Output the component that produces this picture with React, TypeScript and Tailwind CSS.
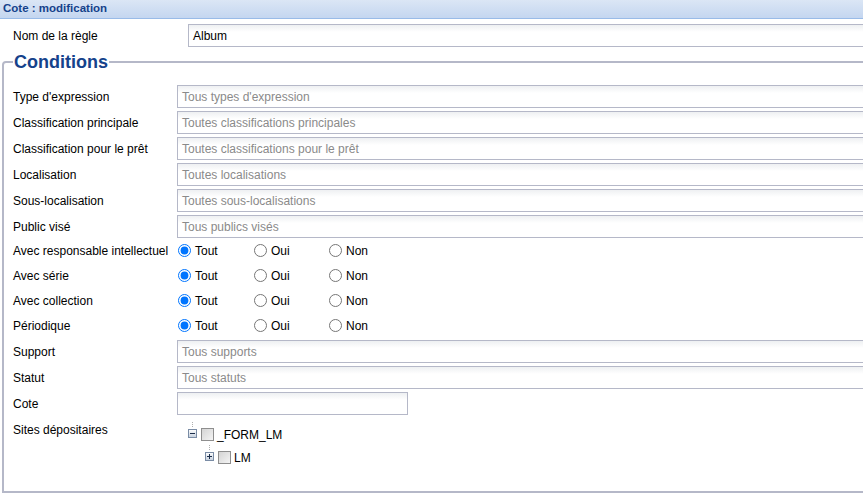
import React from 'react';

const FONT = "font-['Liberation_Sans',Arial,sans-serif]";

type FieldProps = { value?: string; placeholder?: string; className?: string };

// ExtJS-like text field: thin grey border, faint top shading
const TextField: React.FC<FieldProps> = ({ value, placeholder, className }) => (
  <div
    className={`h-[23px] border border-[#b5b8c8] bg-[linear-gradient(to_bottom,#eef0f2,#ffffff_7px)] flex items-center px-[4px] text-[12px] whitespace-nowrap overflow-hidden ${className ?? ''}`}
  >
    {value ? <span className="text-black">{value}</span> : <span className="text-[#8a8a8a]">{placeholder}</span>}
  </div>
);

const Label: React.FC<{ children: React.ReactNode }> = ({ children }) => (
  <div className="text-[12px] text-black whitespace-nowrap leading-none">{children}</div>
);

const selects: [string, string][] = [
  ["Type d'expression", "Tous types d'expression"],
  ['Classification principale', 'Toutes classifications principales'],
  ['Classification pour le prêt', 'Toutes classifications pour le prêt'],
  ['Localisation', 'Toutes localisations'],
  ['Sous-localisation', 'Toutes sous-localisations'],
  ['Public visé', 'Tous publics visés'],
];

const triState = ['Avec responsable intellectuel', 'Avec série', 'Avec collection', 'Périodique'];

const RadioRow: React.FC<{ name: string; label: string }> = ({ name, label }) => (
  <div className="flex items-center h-[25px]">
    <div className="w-[164px] shrink-0">
      <Label>{label}</Label>
    </div>
    <div className="flex items-center text-[12px] text-black pl-[1px]">
      <label className="flex items-center w-[76px] gap-[4px]">
        <input type="radio" name={name} defaultChecked className="w-[13px] h-[13px] m-0" />
        <span>Tout</span>
      </label>
      <label className="flex items-center w-[75px] gap-[4px]">
        <input type="radio" name={name} className="w-[13px] h-[13px] m-0" />
        <span>Oui</span>
      </label>
      <label className="flex items-center gap-[4px]">
        <input type="radio" name={name} className="w-[13px] h-[13px] m-0" />
        <span>Non</span>
      </label>
    </div>
  </div>
);

// small expand/collapse toggle used in the tree
const TreeToggle: React.FC<{ open: boolean }> = ({ open }) => (
  <svg width="9" height="9" viewBox="0 0 9 9" className="shrink-0">
    <defs>
      <linearGradient id={open ? 'tg-o' : 'tg-c'} x1="0" y1="0" x2="0" y2="1">
        <stop offset="0" stopColor="#ffffff" />
        <stop offset="1" stopColor="#c3cedc" />
      </linearGradient>
    </defs>
    <rect x="0.5" y="0.5" width="8" height="8" fill={`url(#${open ? 'tg-o' : 'tg-c'})`} stroke="#7a8ca5" />
    <path d="M2 4.5h5" stroke="#1b2d4a" strokeWidth="1" />
    {!open && <path d="M4.5 2v5" stroke="#1b2d4a" strokeWidth="1" />}
  </svg>
);

const TreeCheck: React.FC = () => (
  <div className="w-[13px] h-[13px] border border-[#8e8e8e] bg-[linear-gradient(135deg,#d4d4d4,#f4f4f4)] shrink-0" />
);

const App: React.FC = () => {
  return (
    <div className={`w-[863px] h-[498px] bg-white overflow-hidden ${FONT}`}>
      {/* window title */}
      <div className="h-[19px] border-b border-[#99bbe8] bg-[linear-gradient(to_bottom,#dbe6f5,#c4d6f0)] flex items-center px-[3px]">
        <span className="text-[11.5px] font-bold text-[#15428b] leading-none">Cote : modification</span>
      </div>

      <div className="flex items-center mt-[5px] h-[23px] pl-[13px] w-[1100px]">
        <div className="w-[175px] shrink-0">
          <Label>Nom de la règle</Label>
        </div>
        <TextField value="Album" className="flex-1" />
      </div>

      <fieldset className="ml-[2px] mt-[4px] w-[1100px] h-[442px] border-2 border-[#b5b8c8] rounded-tl-[4px] pl-[9px] pt-[12px]">
        <legend className="px-[1px] text-[18px] font-bold text-[#15428b] leading-[22px]">Conditions</legend>

        <div className="flex flex-col">
          {selects.map(([label, ph], i) => (
            <div key={label} className={`flex items-center ${i < selects.length - 1 ? 'mb-[3px]' : ''}`}>
              <div className="w-[164px] shrink-0">
                <Label>{label}</Label>
              </div>
              <TextField placeholder={ph} className="flex-1" />
            </div>
          ))}

          <div className="flex flex-col">
            {triState.map((label, i) => (
              <RadioRow key={label} name={`tri-${i}`} label={label} />
            ))}
          </div>

          <div className="flex flex-col gap-[3px] mt-[2px]">
            <div className="flex items-center">
              <div className="w-[164px] shrink-0">
                <Label>Support</Label>
              </div>
              <TextField placeholder="Tous supports" className="flex-1" />
            </div>
            <div className="flex items-center">
              <div className="w-[164px] shrink-0">
                <Label>Statut</Label>
              </div>
              <TextField placeholder="Tous statuts" className="flex-1" />
            </div>
            <div className="flex items-center">
              <div className="w-[164px] shrink-0">
                <Label>Cote</Label>
              </div>
              <TextField className="w-[231px] h-[22px]" />
            </div>
          </div>

          <div className="flex mt-[8px]">
            <div className="w-[175px] shrink-0 pt-[1px]">
              <Label>Sites dépositaires</Label>
            </div>
            <div className="flex flex-col text-[12px] text-black">
              <div className="flex items-end gap-[4px] relative pt-[5px]">
                <span className="absolute left-[4px] top-[-1px] h-[5px] border-l border-dotted border-[#b0b0b0]" />
                <div className="flex items-center gap-[4px] mb-[3px]">
                  <TreeToggle open />
                </div>
                <div className="flex items-center gap-[3px]">
                  <TreeCheck />
                  <span className="leading-none">_FORM_LM</span>
                </div>
              </div>
              <div className="flex items-end gap-[4px] relative pl-[17px] pt-[10px]">
                <span className="absolute left-[21px] top-[4px] h-[5px] border-l border-dotted border-[#b0b0b0]" />
                <div className="mb-[3px]">
                  <TreeToggle open={false} />
                </div>
                <div className="flex items-center gap-[3px]">
                  <TreeCheck />
                  <span className="leading-none">LM</span>
                </div>
              </div>
            </div>
          </div>
        </div>
      </fieldset>
    </div>
  );
};

export default App;
